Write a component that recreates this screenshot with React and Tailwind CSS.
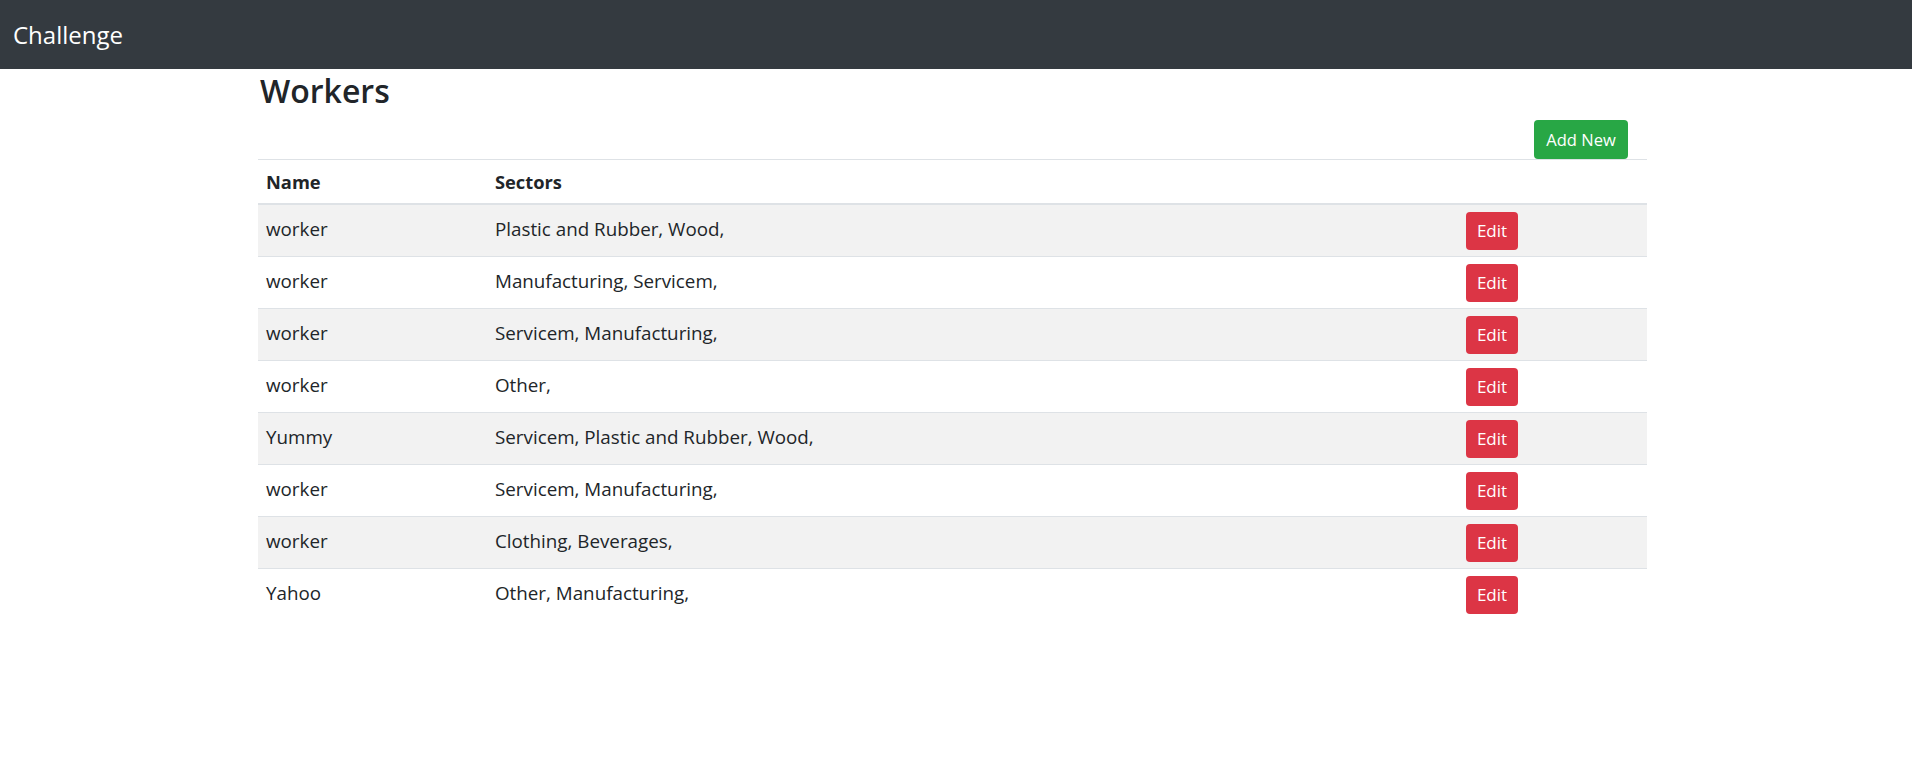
import React from "react";

const rows = [
  ["worker", "Plastic and Rubber, Wood,"],
  ["worker", "Manufacturing, Servicem,"],
  ["worker", "Servicem, Manufacturing,"],
  ["worker", "Other,"],
  ["Yummy", "Servicem, Plastic and Rubber, Wood,"],
  ["worker", "Servicem, Manufacturing,"],
  ["worker", "Clothing, Beverages,"],
  ["Yahoo", "Other, Manufacturing,"],
];

export default function App() {
  return (
    <div className="min-h-[762px] bg-white text-[#212529] font-['Open_Sans',_'Noto_Sans',_sans-serif]">
      <nav className="h-[69px] bg-[#343a40] flex items-center pl-[13px]">
        <span className="text-white text-[24px] leading-none">Challenge</span>
      </nav>
      <div className="ml-[258px] w-[1389px]">
        <h2 className="mt-[3px] pl-[2px] text-[32px] leading-[38px] font-semibold">Workers</h2>
        <div className="mt-[10px] flex justify-end pr-[19px]">
          <button className="w-[94px] h-[39px] rounded-[4px] bg-[#28a745] text-white text-[16.5px] leading-6">
            Add New
          </button>
        </div>
        <table className="w-full border-collapse text-[18.8px] leading-6">
          <thead>
            <tr>
              <th className="w-[229px] text-left font-bold text-[18.3px] px-2 pt-[10px] pb-[9px] border-t border-b-2 border-[#dee2e6]">Name</th>
              <th className="text-left font-bold text-[18.3px] px-2 pt-[10px] pb-[9px] border-t border-b-2 border-[#dee2e6]">Sectors</th>
              <th className="w-[189px] px-2 border-t border-b-2 border-[#dee2e6]"></th>
            </tr>
          </thead>
          <tbody>
            {rows.map((r, i) => (
              <tr key={i} className={i % 2 === 0 ? "bg-[#f2f2f2]" : "bg-white"}>
                <td className="align-top px-2 pt-3 pb-3 border-t border-[#dee2e6]">{r[0]}</td>
                <td className="align-top px-2 pt-3 pb-3 border-t border-[#dee2e6]">{r[1]}</td>
                <td className="align-top px-2 pt-[7px] pb-[6px] border-t border-[#dee2e6]">
                  <button className="w-[52px] h-[38px] rounded-[4px] bg-[#dc3545] text-white text-[17px] leading-6">
                    Edit
                  </button>
                </td>
              </tr>
            ))}
          </tbody>
        </table>
      </div>
    </div>
  );
}
